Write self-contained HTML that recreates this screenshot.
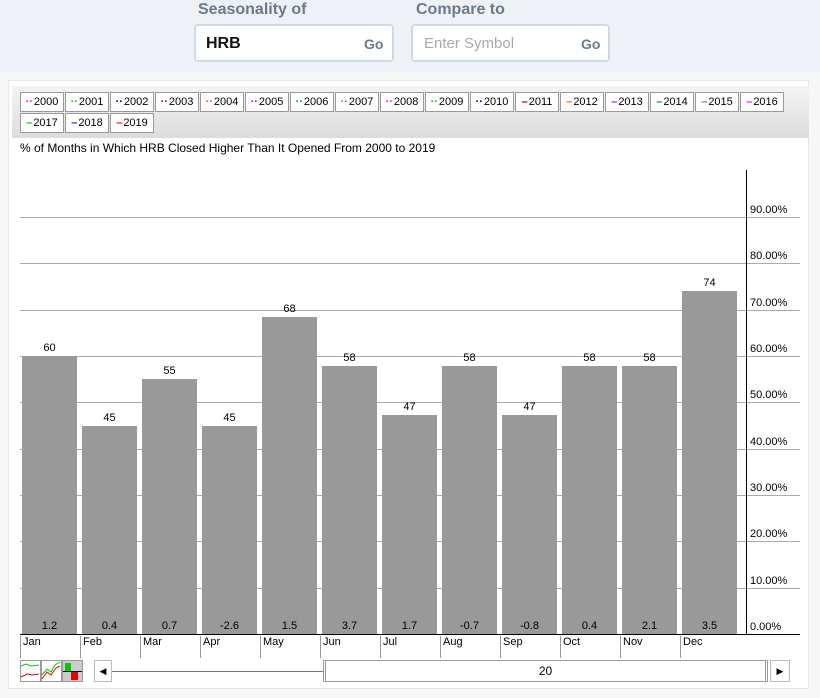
<!DOCTYPE html>
<html><head><meta charset="utf-8"><style>
*{margin:0;padding:0;box-sizing:border-box}
body{width:820px;height:698px;background:#f7f7f7;font-family:"Liberation Sans",sans-serif;position:relative;overflow:hidden}
.top{position:absolute;left:0;top:0;width:820px;height:72px;background:#eef2f6}
.lab{position:absolute;top:1px;font-size:16px;font-weight:bold;color:#6b7a8a}
.inp{position:absolute;top:24px;height:38px;background:#fff;border:2px solid #cfd9e3;border-radius:4px}
.inp span{position:absolute;top:9px;font-size:16px}
.panel{position:absolute;left:8px;top:80px;width:801px;height:609px;background:#fff;border:1px solid #e6e6e6}
.leg{position:absolute;left:12px;top:86px;width:797px;height:52px;background:linear-gradient(#f4f4f4,#dcdcdc)}
.b{position:absolute;height:20px;width:44px;background:#fff;border:1px solid #999;font-size:11px;line-height:18px;text-align:center;color:#000}
.b i{font-style:normal;font-weight:bold;margin-right:1px}
.a{position:absolute;font-size:11px;color:#000}
.g{position:absolute;left:20px;width:780px;height:1px;background:#aaa}
.bar{position:absolute;width:55px;background:#999}
.v{position:absolute;width:55px;text-align:center;font-size:11px}
.m{position:absolute;top:636px;font-size:11px;border-left:1px solid #999;padding-left:2px;height:22px;line-height:13px}
</style></head><body>
<div class="top"></div>
<div class="lab" style="left:198px">Seasonality of</div>
<div class="lab" style="left:416px">Compare to</div>
<div class="inp" style="left:194px;width:200px"><span style="left:10px;font-weight:bold;color:#111">HRB</span><span style="left:168px;font-weight:bold;color:#6b7a8a;font-size:14px;top:10px">Go</span></div>
<div class="inp" style="left:411px;width:199px"><span style="left:11px;color:#aaa;font-size:15px">Enter Symbol</span><span style="left:168px;font-weight:bold;color:#6b7a8a;font-size:14px;top:10px">Go</span></div>
<div class="panel"></div>
<div class="leg"></div>
<div class="b" style="left:20px;top:92px"><i style="color:#f0f">··</i>2000</div>
<div class="b" style="left:65px;top:92px"><i style="color:#0c0">··</i>2001</div>
<div class="b" style="left:110px;top:92px"><i style="color:#00a">··</i>2002</div>
<div class="b" style="left:155px;top:92px"><i style="color:#800">··</i>2003</div>
<div class="b" style="left:200px;top:92px"><i style="color:#f50">··</i>2004</div>
<div class="b" style="left:245px;top:92px"><i style="color:#a0f">··</i>2005</div>
<div class="b" style="left:290px;top:92px"><i style="color:#088">··</i>2006</div>
<div class="b" style="left:335px;top:92px"><i style="color:#777">··</i>2007</div>
<div class="b" style="left:380px;top:92px"><i style="color:#f0f">··</i>2008</div>
<div class="b" style="left:425px;top:92px"><i style="color:#0c0">··</i>2009</div>
<div class="b" style="left:470px;top:92px"><i style="color:#00a">··</i>2010</div>
<div class="b" style="left:515px;top:92px"><i style="color:#800">–</i>2011</div>
<div class="b" style="left:560px;top:92px"><i style="color:#f50">–</i>2012</div>
<div class="b" style="left:605px;top:92px"><i style="color:#a0f">–</i>2013</div>
<div class="b" style="left:650px;top:92px"><i style="color:#088">–</i>2014</div>
<div class="b" style="left:695px;top:92px"><i style="color:#777">–</i>2015</div>
<div class="b" style="left:740px;top:92px"><i style="color:#f0f">–</i>2016</div>
<div class="b" style="left:20px;top:113px"><i style="color:#0c0">–</i>2017</div>
<div class="b" style="left:65px;top:113px"><i style="color:#50c">–</i>2018</div>
<div class="b" style="left:110px;top:113px"><i style="color:#f00">–</i>2019</div>
<div style="position:absolute;left:20px;top:141px;font-size:12px">% of Months in Which HRB Closed Higher Than It Opened From 2000 to 2019</div>
<div class="g" style="top:217px"></div><div class="g" style="top:263px"></div><div class="g" style="top:310px"></div><div class="g" style="top:356px"></div><div class="g" style="top:402px"></div><div class="g" style="top:449px"></div><div class="g" style="top:495px"></div><div class="g" style="top:541px"></div><div class="g" style="top:588px"></div>
<div class="a" style="left:750px;top:204px">90.00%</div><div class="a" style="left:750px;top:250px">80.00%</div><div class="a" style="left:750px;top:297px">70.00%</div><div class="a" style="left:750px;top:343px">60.00%</div><div class="a" style="left:750px;top:389px">50.00%</div><div class="a" style="left:750px;top:436px">40.00%</div><div class="a" style="left:750px;top:482px">30.00%</div><div class="a" style="left:750px;top:528px">20.00%</div><div class="a" style="left:750px;top:575px">10.00%</div><div class="a" style="left:750px;top:621px">0.00%</div>
<div class="bar" style="left:22px;top:356px;height:278px"></div><div class="v" style="left:22px;top:342px">60</div><div class="v" style="left:22px;top:620px">1.2</div>
<div class="bar" style="left:82px;top:426px;height:208px"></div><div class="v" style="left:82px;top:412px">45</div><div class="v" style="left:82px;top:620px">0.4</div>
<div class="bar" style="left:142px;top:379px;height:255px"></div><div class="v" style="left:142px;top:365px">55</div><div class="v" style="left:142px;top:620px">0.7</div>
<div class="bar" style="left:202px;top:426px;height:208px"></div><div class="v" style="left:202px;top:412px">45</div><div class="v" style="left:202px;top:620px">-2.6</div>
<div class="bar" style="left:262px;top:317px;height:317px"></div><div class="v" style="left:262px;top:303px">68</div><div class="v" style="left:262px;top:620px">1.5</div>
<div class="bar" style="left:322px;top:366px;height:268px"></div><div class="v" style="left:322px;top:352px">58</div><div class="v" style="left:322px;top:620px">3.7</div>
<div class="bar" style="left:382px;top:415px;height:219px"></div><div class="v" style="left:382px;top:401px">47</div><div class="v" style="left:382px;top:620px">1.7</div>
<div class="bar" style="left:442px;top:366px;height:268px"></div><div class="v" style="left:442px;top:352px">58</div><div class="v" style="left:442px;top:620px">-0.7</div>
<div class="bar" style="left:502px;top:415px;height:219px"></div><div class="v" style="left:502px;top:401px">47</div><div class="v" style="left:502px;top:620px">-0.8</div>
<div class="bar" style="left:562px;top:366px;height:268px"></div><div class="v" style="left:562px;top:352px">58</div><div class="v" style="left:562px;top:620px">0.4</div>
<div class="bar" style="left:622px;top:366px;height:268px"></div><div class="v" style="left:622px;top:352px">58</div><div class="v" style="left:622px;top:620px">2.1</div>
<div class="bar" style="left:682px;top:291px;height:343px"></div><div class="v" style="left:682px;top:277px">74</div><div class="v" style="left:682px;top:620px">3.5</div>
<div style="position:absolute;left:746px;top:170px;width:1px;height:464px;background:#000"></div>
<div style="position:absolute;left:20px;top:634px;width:780px;height:1px;background:#000"></div>
<div class="m" style="left:20px">Jan</div><div class="m" style="left:80px">Feb</div><div class="m" style="left:140px">Mar</div><div class="m" style="left:200px">Apr</div><div class="m" style="left:260px">May</div><div class="m" style="left:320px">Jun</div><div class="m" style="left:380px">Jul</div><div class="m" style="left:440px">Aug</div><div class="m" style="left:500px">Sep</div><div class="m" style="left:560px">Oct</div><div class="m" style="left:620px">Nov</div><div class="m" style="left:680px">Dec</div>
<svg style="position:absolute;left:20px;top:660px" width="66" height="22">
<rect x="0.5" y="0.5" width="20" height="21" fill="#fff" stroke="#999"/><path d="M1 6 L6 4 L11 6 L19 5" stroke="#0c0" fill="none"/><path d="M1 17 L7 14 L12 15 L19 14" stroke="#e00" fill="none"/>
<rect x="21.5" y="0.5" width="20" height="21" fill="#fff" stroke="#999"/><path d="M22 15 L27 9 L31 12 L35 5 L40 2" stroke="#0c0" fill="none"/><path d="M22 19 L27 12 L31 15 L36 8 L40 6" stroke="#e00" fill="none"/>
<rect x="42.5" y="0.5" width="20" height="21" fill="#ccc" stroke="#999"/><rect x="45" y="3" width="6" height="8" fill="#0c0"/><rect x="51" y="12" width="7" height="8" fill="#e00"/><path d="M43 11.5 H62" stroke="#000"/>
</svg>
<div style="position:absolute;left:94px;top:660px;width:18px;height:22px;border:1px solid #bbb;background:#fff;font-size:9px;text-align:center;line-height:20px">◀</div>
<div style="position:absolute;left:112px;top:671px;width:211px;height:1px;background:#777"></div>
<div style="position:absolute;left:323px;top:660px;width:445px;height:22px;border:1px solid #999;border-left:3px double #999;border-right:3px double #999;background:#fff;font-size:12px;text-align:center;line-height:20px">20</div>
<div style="position:absolute;left:770px;top:660px;width:20px;height:22px;border:1px solid #bbb;background:#fff;font-size:9px;text-align:center;line-height:20px">▶</div>
</body></html>
